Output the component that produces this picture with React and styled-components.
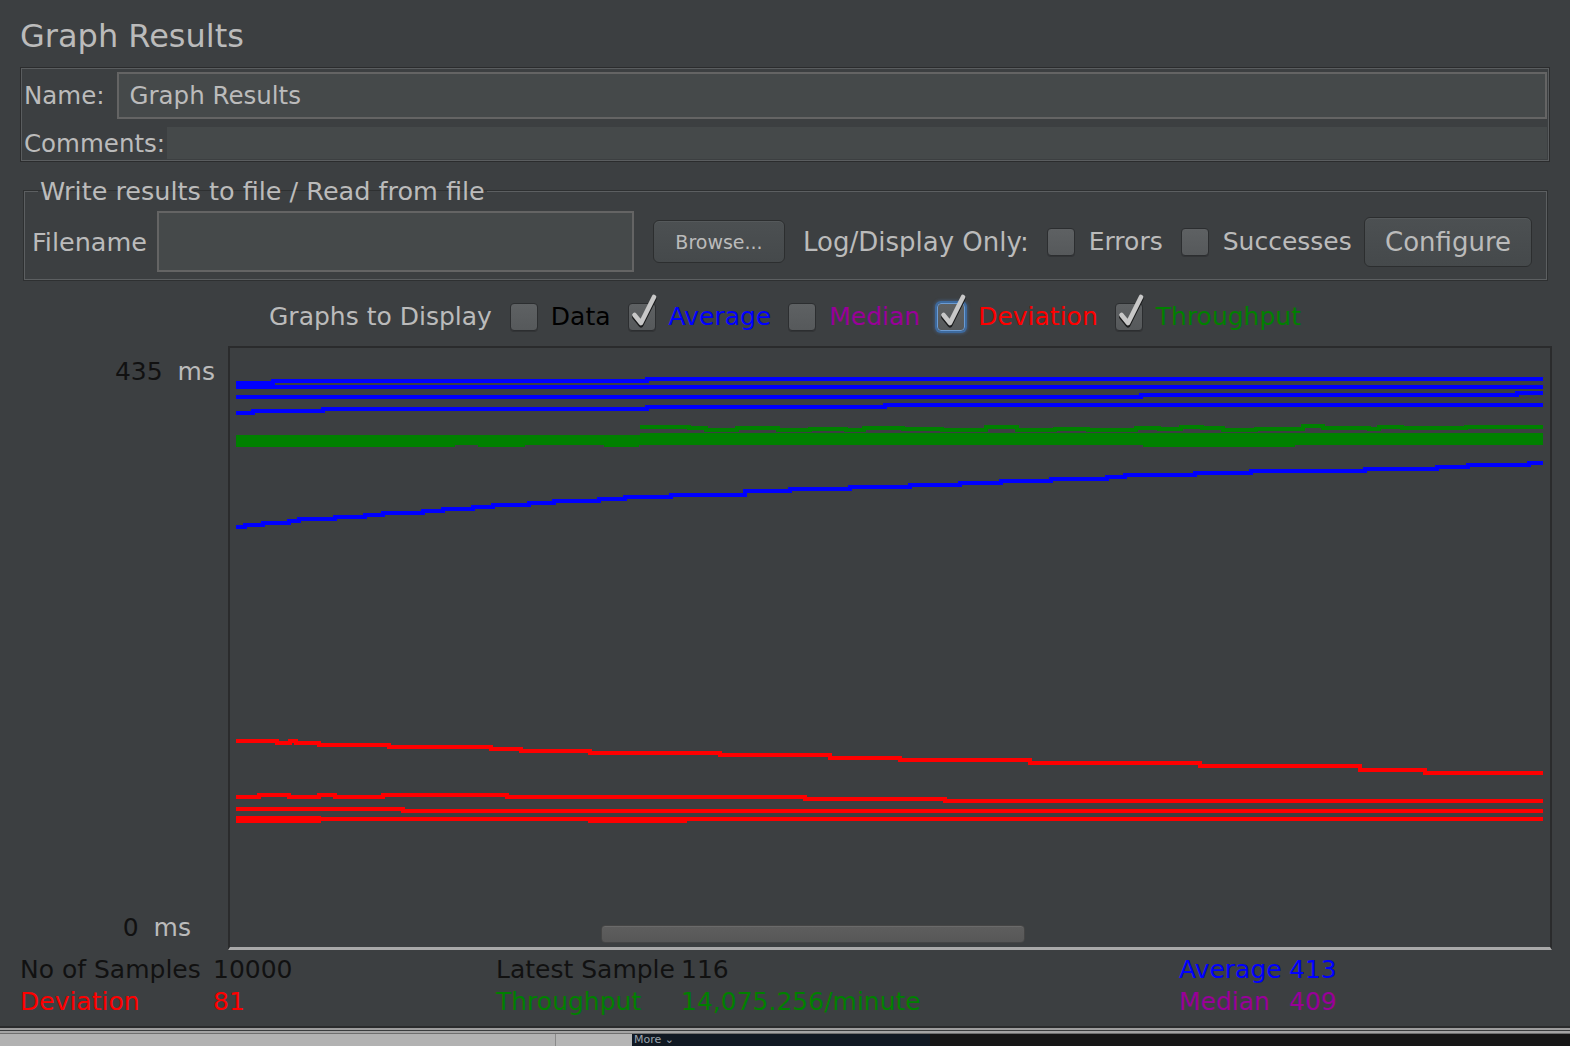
import React from "react";
import styled, { createGlobalStyle, css } from "styled-components";

const GlobalStyle = createGlobalStyle`
    html, body {
        margin: 0;
        padding: 0;
        background: #3c3f41;
    }
    body {
        font-family: "DejaVu Sans", "Liberation Sans", sans-serif;
        color: #bbbbbb;
    }
`;

const Page = styled.div`
    width: 1570px;
    height: 1046px;
    overflow: hidden;
    display: flex;
    flex-direction: column;
    background: #3c3f41;
`;

const Title = styled.div`
    height: 67px;
    box-sizing: border-box;
    padding: 4px 0 0 20px;
    display: flex;
    align-items: center;
    font-size: 32px;
`;

const NamePanel = styled.div`
    margin: 0 20px;
    height: 95px;
    box-sizing: border-box;
    border: 1px solid #2b2c2d;
    box-shadow: inset 0 0 0 1px #5a5d5f;
    display: flex;
    flex-direction: column;
    padding: 2px 2px 2px 3px;
`;

const NameRow = styled.div`
    display: flex;
    align-items: center;
    height: 52px;
`;

const CommentsRow = styled.div`
    display: flex;
    align-items: stretch;
    flex: 1;
    padding-top: 7px;
`;

const Label = styled.span`
    font-size: ${(p) => p.$size || 24.5}px;
    color: #bbbbbb;
    white-space: nowrap;
    display: flex;
    align-items: center;
`;

const TextField = styled.div`
    flex: ${(p) => (p.$grow ? 1 : "none")};
    width: ${(p) => (p.$width ? `${p.$width}px` : "auto")};
    height: ${(p) => p.$height}px;
    margin-left: ${(p) => p.$gap || 0}px;
    box-sizing: border-box;
    background: #45494a;
    border: ${(p) => (p.$flat ? "none" : "2px solid #646464")};
    display: flex;
    align-items: center;
    padding-left: 11px;
    font-size: 24.5px;
    color: #bbbbbb;
`;

const FileSet = styled.fieldset`
    margin: 16px 23px 0 24px;
    padding: 7px 14px 0 7px;
    border: 1px solid #5c5f61;
    box-shadow: 0 0 0 1px #2e3031;
    height: 102px;
    box-sizing: border-box;
    display: flex;
    align-items: flex-start;
`;

const Legend = styled.legend`
    font-size: 25.5px;
    color: #bbbbbb;
    padding: 0 2px;
    margin-left: 6px;
    line-height: 26px;
`;

const FileRow = styled.div`
    display: flex;
    align-items: center;
    width: 100%;
    height: 61px;
`;

const Button = styled.button`
    font-family: inherit;
    height: ${(p) => p.$height}px;
    width: ${(p) => p.$width}px;
    margin-left: ${(p) => p.$gap || 0}px;
    font-size: ${(p) => p.$size}px;
    color: #bbbbbb;
    background: linear-gradient(#4c5052, #45494b);
    border: 1px solid #2c2e2f;
    border-radius: 6px;
    box-shadow: inset 0 1px 0 #55595b;
    padding: 0;
    flex: none;
`;

const Spacer = styled.div`
    flex: 1;
`;

const BoxWrap = styled.span`
    position: relative;
    width: 28px;
    height: 28px;
    flex: none;
    margin-left: ${(p) => p.$gap || 0}px;
    margin-right: ${(p) => p.$after || 0}px;
    box-sizing: border-box;
    border-radius: 4px;
    background: linear-gradient(#5e6163, #56595b);
    border: 1px solid #2c2e30;
    box-shadow: 0 1px 0 #323436;
    ${(p) =>
        p.$focus &&
        css`
            border-color: #6b9bd3;
            box-shadow: 0 0 0 2px #3d6a9e, 0 0 3px 3px rgba(80, 130, 200, 0.35);
        `}
`;

const CheckMark = styled.svg`
    position: absolute;
    left: 2px;
    top: -10px;
    width: 28px;
    height: 36px;
    overflow: visible;
`;

const Checkbox = ({ checked, focus, gap, after }) => (
    <BoxWrap $focus={focus} $gap={gap} $after={after}>
        {checked && (
            <CheckMark viewBox="0 0 28 36">
                <path d="M3.5 21 L10 29 L23 3" fill="none" stroke="#1a1b1c" strokeWidth="5" strokeLinecap="round" strokeLinejoin="round" transform="translate(0 2)" />
                <path d="M3.5 21 L10 29 L23 3" fill="none" stroke="#c8c8c8" strokeWidth="4.6" strokeLinecap="round" strokeLinejoin="round" />
            </CheckMark>
        )}
    </BoxWrap>
);

const Text = styled.span`
    font-size: ${(p) => p.$size || 25}px;
    color: ${(p) => p.$color || "#bbbbbb"};
    white-space: nowrap;
    margin-left: ${(p) => p.$gap || 0}px;
`;

const GraphsRow = styled.div`
    height: 66px;
    box-sizing: border-box;
    padding-top: 7px;
    display: flex;
    align-items: center;
    justify-content: center;
`;

const GraphArea = styled.div`
    display: flex;
    height: 604px;
    flex: none;
`;

const AxisCol = styled.div`
    width: 228px;
    flex: none;
    display: flex;
    flex-direction: column;
    justify-content: space-between;
    padding: 11px 0 8px;
    box-sizing: border-box;
`;

const AxisLabel = styled.div`
    display: flex;
    justify-content: flex-end;
    padding-right: ${(p) => p.$right}px;
    font-size: 25px;
    gap: 15px;
    color: #bbbbbb;
`;

const Dark = styled.span`
    color: #111111;
`;

const GraphPanel = styled.div`
    position: relative;
    width: 1324px;
    height: 604px;
    box-sizing: border-box;
    border-left: 2px solid #2a2b2c;
    border-top: 2px solid #2a2b2c;
    border-right: 2px solid #2a2b2c;
    border-bottom: 3px solid #a9a9a9;
`;

const Plot = styled.svg`
    display: block;
    width: 1320px;
    height: 599px;
`;

const ScrollThumb = styled.div`
    position: absolute;
    left: 371px;
    top: 577px;
    width: 424px;
    height: 18px;
    box-sizing: border-box;
    border-radius: 4px;
    background: linear-gradient(#5e5e5e, #575757);
    border: 1px solid #454545;
    box-shadow: inset 0 1px 0 #6a6a6a;
`;

const Stats = styled.div`
    display: grid;
    grid-template-columns: 193px 283px 185px 498px 110px 1fr;
    padding: 4px 0 0 20px;
    font-size: 25px;
    line-height: 32px;
`;

const Stat = styled.span`
    color: ${(p) => p.$color};
    white-space: nowrap;
`;

const BottomRule = styled.div`
    margin-top: auto;
    height: 8px;
    flex: none;
    background: linear-gradient(
        #2a2b2c 0 2px,
        #9d9d9d 2px 4px,
        #3a3c3d 4px 5px,
        #a4a4a4 5px 7px,
        #6f6f6f 7px 8px
    );
`;

const Strip = styled.div`
    display: flex;
    height: 12px;
    flex: none;
    overflow: hidden;
`;

const StripPart = styled.div`
    width: ${(p) => (p.$width ? `${p.$width}px` : "auto")};
    flex: ${(p) => (p.$width ? "none" : 1)};
    background: ${(p) => p.$bg};
    border-right: ${(p) => (p.$divider ? "1px solid #8a8a8a" : "none")};
    color: #9aa3ad;
    font-size: 11px;
    line-height: 12px;
    padding-left: ${(p) => (p.$text ? 2 : 0)}px;
    box-sizing: border-box;
    overflow: hidden;
`;

/* ---- plot data (page coordinates) ---- */

const BLUE = "#0000ff";
const RED = "#ff0000";
const GREEN = "#008000";
const PURPLE = "#990099";
const END = 1543;

const stepPath = (pts, end = END) => {
    let d = `M${pts[0][0]} ${pts[0][1]}`;
    for (let i = 1; i < pts.length; i++) {
        d += ` H${pts[i][0]} V${pts[i][1]}`;
    }
    return d + ` H${end}`;
};

const blueLines = [
    [[236, 383], [273, 381], [647, 379]],
    [[236, 387]],
    [[236, 397], [1141, 395], [1517, 393]],
    [[236, 413], [253, 411], [323, 409], [647, 407], [885, 405]],
    [
        [236, 527], [245, 525], [263, 523], [289, 521], [299, 519], [335, 517],
        [365, 515], [383, 513], [423, 511], [443, 509], [473, 507], [493, 505],
        [529, 503], [554, 501], [599, 499], [625, 497], [671, 495], [745, 491],
        [790, 489], [850, 487], [910, 485], [960, 483], [1001, 481], [1051, 479],
        [1107, 477], [1125, 475], [1195, 473], [1251, 471], [1365, 469],
        [1437, 467], [1468, 465], [1529, 463],
    ],
];

const redLines = [
    [
        [236, 741], [277, 743], [290, 741], [296, 743], [319, 745], [389, 747],
        [491, 749], [521, 751], [590, 753], [720, 755], [830, 758], [900, 760],
        [1030, 763], [1200, 766], [1360, 770], [1425, 773],
    ],
    [
        [236, 797], [259, 795], [289, 797], [319, 795], [335, 797], [383, 795],
        [507, 797], [805, 799], [945, 801],
    ],
    [[236, 809], [403, 811]],
    [[236, 818], [319, 819], [590, 821], [685, 819]],
    [[236, 821], [319, 819]],
];

const rand = (() => {
    let s = 7;
    return () => {
        s = (s * 16807) % 2147483647;
        return (s - 1) / 2147483646;
    };
})();

const greenNoise = (() => {
    const top = [];
    let x = 640;
    while (x < END) {
        const t = (x - 640) / (END - 640);
        const y = Math.round(429 - t * 1.5 + (rand() - 0.5) * 4);
        top.push([x, y]);
        x += 8 + Math.floor(rand() * 45);
    }
    const low = [];
    x = 236;
    while (x < 640) {
        const y = rand() < 0.5 ? 444 : 446;
        low.push([x, y]);
        x += 10 + Math.floor(rand() * 40);
    }
    return { top, low };
})();

const Chart = () => (
    <Plot viewBox="230 348 1320 599" shapeRendering="crispEdges">
        <rect x="236" y="435" width={END - 236} height="10" fill={GREEN} />
        <rect x="640" y="433" width={END - 640} height="3" fill={GREEN} />
        <path d="M236 436 H640" fill="none" stroke={GREEN} strokeWidth="2" />
        <path d={stepPath(greenNoise.top)} fill="none" stroke={GREEN} strokeWidth="4" />
        <path d={stepPath(greenNoise.low, 640)} fill="none" stroke={GREEN} strokeWidth="2" />
        <path d="M1143 445 H1295" fill="none" stroke={GREEN} strokeWidth="3" />
        {blueLines.map((l, i) => (
            <path key={`b${i}`} d={stepPath(l)} fill="none" stroke={BLUE} strokeWidth="4" />
        ))}
        {redLines.map((l, i) => (
            <path key={`r${i}`} d={stepPath(l)} fill="none" stroke={RED} strokeWidth="4" />
        ))}
    </Plot>
);

const App = () => {
    return (
        <Page>
            <GlobalStyle />
            <Title>Graph Results</Title>

            <NamePanel>
                <NameRow>
                    <Label>Name:</Label>
                    <TextField $grow $height={47} $gap={12}>
                        Graph Results
                    </TextField>
                </NameRow>
                <CommentsRow>
                    <Label>Comments:</Label>
                    <TextField $grow $flat $height={32} $gap={2} />
                </CommentsRow>
            </NamePanel>

            <FileSet>
                <Legend>Write results to file / Read from file</Legend>
                <FileRow>
                    <Label $size={25.5}>Filename</Label>
                    <TextField $width={477} $height={61} $gap={10} />
                    <Button $width={132} $height={43} $gap={19} $size={19}>
                        Browse...
                    </Button>
                    <Text $size={26} $gap={18}>Log/Display Only:</Text>
                    <Checkbox gap={18} after={14} />
                    <Text $size={25}>Errors</Text>
                    <Checkbox gap={18} after={14} />
                    <Text $size={25}>Successes</Text>
                    <Spacer />
                    <Button $width={168} $height={50} $size={26}>
                        Configure
                    </Button>
                </FileRow>
            </FileSet>

            <GraphsRow>
                <Text>Graphs to Display</Text>
                <Checkbox gap={18} after={13} />
                <Text $color="#000000">Data</Text>
                <Checkbox checked gap={17} after={13} />
                <Text $color={BLUE}>Average</Text>
                <Checkbox gap={17} after={13} />
                <Text $color={PURPLE}>Median</Text>
                <Checkbox checked focus gap={17} after={13} />
                <Text $color={RED}>Deviation</Text>
                <Checkbox checked gap={17} after={13} />
                <Text $color={GREEN}>Throughput</Text>
            </GraphsRow>

            <GraphArea>
                <AxisCol>
                    <AxisLabel $right={13}>
                        <Dark>435</Dark>
                        <span>ms</span>
                    </AxisLabel>
                    <AxisLabel $right={37}>
                        <Dark>0</Dark>
                        <span>ms</span>
                    </AxisLabel>
                </AxisCol>
                <GraphPanel>
                    <Chart />
                    <ScrollThumb />
                </GraphPanel>
            </GraphArea>

            <Stats>
                <Stat $color="#111111">No of Samples</Stat>
                <Stat $color="#111111">10000</Stat>
                <Stat $color="#111111">Latest Sample</Stat>
                <Stat $color="#111111">116</Stat>
                <Stat $color={BLUE}>Average</Stat>
                <Stat $color={BLUE}>413</Stat>
                <Stat $color={RED}>Deviation</Stat>
                <Stat $color={RED}>81</Stat>
                <Stat $color={GREEN}>Throughput</Stat>
                <Stat $color={GREEN}>14,075.256/minute</Stat>
                <Stat $color={PURPLE}>Median</Stat>
                <Stat $color={PURPLE}>409</Stat>
            </Stats>

            <BottomRule />
            <Strip>
                <StripPart $width={556} $bg="#b2b2b2" $divider />
                <StripPart $width={76} $bg="#b5b5b5" />
                <StripPart $width={298} $bg="#111923" $text>
                    More ⌄
                </StripPart>
                <StripPart $bg="#161616" />
            </Strip>
        </Page>
    );
};

export default App;
